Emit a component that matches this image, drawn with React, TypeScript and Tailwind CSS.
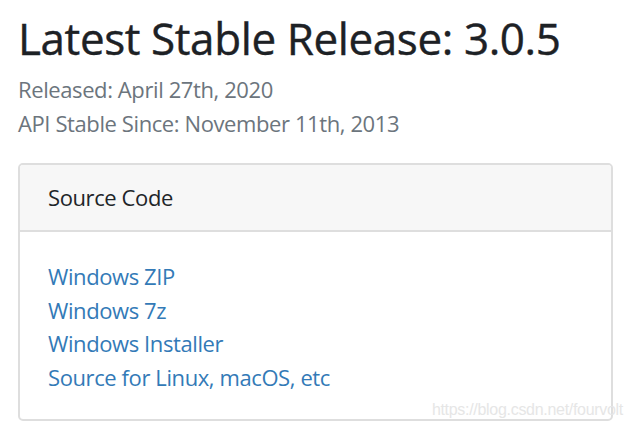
import React from 'react'

const links = ['Windows ZIP', 'Windows 7z', 'Windows Installer', 'Source for Linux, macOS, etc']

const App = () => {
  return (
    <div
      className="relative w-[638px] h-[433px] bg-white overflow-hidden pl-[18px] pt-[8px]"
      style={{ fontFamily: '"Open Sans", "Noto Sans", sans-serif' }}
    >
      <h1 className="text-[44px] leading-[60px] font-medium text-[#1d2125] tracking-[-0.4px] [-webkit-text-stroke:0.4px_#1d2125]">
        Latest Stable Release: 3.0.5
      </h1>
      <div className="mt-[4px] text-[22px] leading-[34px] text-[#6c757d] tracking-[-0.4px]">
        <p>Released: April 27th, 2020</p>
        <p>API Stable Since: November 11th, 2013</p>
      </div>
      <div className="mt-[23px] w-[595px] h-[258px] border-2 border-[#dedede] rounded-[5px] flex flex-col overflow-hidden">
        <div className="h-[67px] shrink-0 bg-[#f7f7f7] border-b-2 border-[#dedede] flex items-center pl-[28px] text-[22px] text-[#212529] tracking-[-0.4px]">
          Source Code
        </div>
        <ul className="pl-[28px] pt-[28px] text-[22px] leading-[33.5px] text-[#337ab7] tracking-[-0.4px]">
          {links.map((l) => (
            <li key={l}>
              <a href="#">{l}</a>
            </li>
          ))}
        </ul>
      </div>
      <div
        className="absolute right-[15px] bottom-[11px] text-[16px] text-[#e6e6e6] tracking-[-0.3px]"
        style={{ fontFamily: '"Liberation Sans", Arial, sans-serif' }}
      >
        https://blog.csdn.net/fourvolt
      </div>
    </div>
  )
}

export default App
